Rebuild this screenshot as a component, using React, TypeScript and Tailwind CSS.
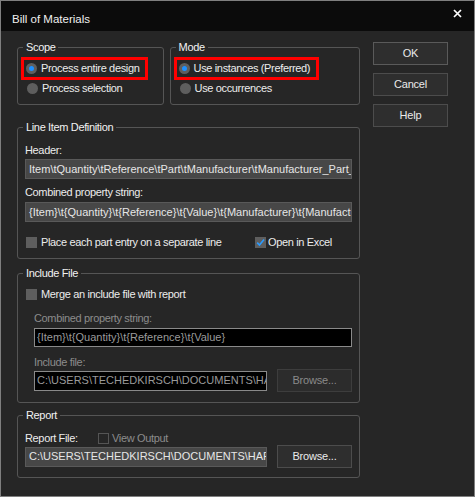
import React from "react";

function Radio({ checked }: { checked?: boolean }) {
  return (
    <span className="relative inline-flex h-[11px] w-[11px] shrink-0 items-center justify-center rounded-full bg-[#5e5e5e]">
      {checked && <span className="h-[5px] w-[5px] rounded-full bg-[#1e90ff]" />}
    </span>
  );
}

function Check({ checked, disabled }: { checked?: boolean; disabled?: boolean }) {
  if (disabled) {
    return <span className="inline-block h-[11px] w-[11px] shrink-0 border border-[#555555] bg-transparent" />;
  }
  return (
    <span className="relative inline-flex h-[11px] w-[11px] shrink-0 items-center justify-center bg-[#5e5e5e]">
      {checked && (
        <svg width="9" height="9" viewBox="0 0 9 9" className="absolute">
          <path d="M1.2 4.6 L3.5 7 L8 1.5" fill="none" stroke="#2b9bff" strokeWidth="1.6" />
        </svg>
      )}
    </span>
  );
}

function Group({
  title,
  className,
  inner,
  children,
}: {
  title: string;
  className?: string;
  inner?: string;
  children: React.ReactNode;
}) {
  return (
    <fieldset className={"rounded-[3px] border border-[#555555] " + (className ?? "")}>
      <legend className="ml-[5px] px-[3px] text-[11px] leading-[14px] tracking-[-0.35px] text-[#f2f2f2]">{title}</legend>
      <div className={inner ?? ""}>{children}</div>
    </fieldset>
  );
}

function Btn({ label, disabled, className }: { label: string; disabled?: boolean; className?: string }) {
  return (
    <div
      className={
        "flex h-[23px] w-[75px] shrink-0 items-center justify-center border text-[11px] tracking-[-0.2px] " +
        (disabled ? "border-[#3d3d3d] bg-[#2c2c2c] text-[#8a8a8a] " : "border-[#4c4c4c] bg-[#2e2e2e] text-[#eaeaea] ") +
        (className ?? "")
      }
    >
      {label}
    </div>
  );
}

const lbl = "tracking-[-0.35px]";

export default function App() {
  return (
    <div className="h-[497px] w-[475px] overflow-hidden border border-[#7f7f7f] bg-[#262626] font-['Liberation_Sans',Arial,sans-serif] text-[11px] text-[#ececec]">
      {/* Title bar */}
      <div className="flex h-[30px] items-center justify-between bg-[#0b0b0b] pl-[11px] pr-[12px]">
        <span className="mt-[7px] text-[11.5px] text-[#f0f0f0]">Bill of Materials</span>
        <svg width="9" height="9" viewBox="0 0 9 9" className="mb-[5px]">
          <path d="M1 1 L8 8 M8 1 L1 8" stroke="#ffffff" strokeWidth="1.7" />
        </svg>
      </div>

      <div className="flex pl-[16px] pt-[9px]">
        {/* Left column */}
        <div className="flex w-[343px] flex-col">
          <div className="flex gap-[6px]">
            <Group title="Scope" className="h-[65px] w-[147px]">
              <div className="ml-[3px] mt-[3px] flex h-[23px] w-[127px] items-center border-[3px] border-[#ff0000] pl-[2px]">
                <Radio checked />
                <span className={"ml-[4px] whitespace-nowrap " + lbl}>Process entire design</span>
              </div>
              <div className="flex h-[16px] items-center pl-[9px]">
                <Radio />
                <span className={"ml-[4px] whitespace-nowrap " + lbl}>Process selection</span>
              </div>
            </Group>
            <Group title="Mode" className="h-[65px] w-[191px]">
              <div className="ml-[3px] mt-[3px] flex h-[23px] w-[145px] items-center border-[3px] border-[#ff0000] pl-[2px]">
                <Radio checked />
                <span className={"ml-[4px] whitespace-nowrap " + lbl}>Use instances (Preferred)</span>
              </div>
              <div className="flex h-[16px] items-center pl-[9px]">
                <Radio />
                <span className={"ml-[4px] whitespace-nowrap " + lbl}>Use occurrences</span>
              </div>
            </Group>
          </div>

          <Group title="Line Item Definition" className="mt-[15px] h-[139px] w-[343px]" inner="px-[7px]">
            <div className={"mt-[9px] h-[14px] leading-[14px] " + lbl}>Header:</div>
            <div className="mt-[2px] flex h-[20px] w-[327px] items-center overflow-hidden whitespace-nowrap border border-[#595959] bg-[#474747] pl-[3px] text-[#e6e6e6]">
              Item\tQuantity\tReference\tPart\tManufacturer\tManufacturer_Part_Number
            </div>
            <div className={"mt-[6px] h-[14px] leading-[14px] " + lbl}>Combined property string:</div>
            <div className="mt-[3px] flex h-[20px] w-[327px] items-center overflow-hidden whitespace-nowrap border border-[#595959] bg-[#474747] pl-[3px] text-[#e6e6e6]">
              {"{Item}\\t{Quantity}\\t{Reference}\\t{Value}\\t{Manufacturer}\\t{Manufacturer_Part_Number}"}
            </div>
            <div className="mt-[13px] flex h-[14px] items-center">
              <span className="ml-[1px] flex">
                <Check />
              </span>
              <span className={"ml-[4px] w-[214px] shrink-0 whitespace-nowrap " + lbl}>Place each part entry on a separate line</span>
              <span className="flex">
                <Check checked />
              </span>
              <span className={"ml-[2px] whitespace-nowrap " + lbl}>Open in Excel</span>
            </div>
          </Group>

          <Group title="Include File" className="mt-[7px] h-[137px] w-[343px]" inner="px-[7px]">
            <div className="mt-[7px] flex h-[14px] items-center">
              <span className="ml-[1px] flex">
                <Check />
              </span>
              <span className={"ml-[4px] whitespace-nowrap " + lbl}>Merge an include file with report</span>
            </div>
            <div className={"ml-[9px] mt-[10px] h-[14px] leading-[14px] text-[#8c8c8c] " + lbl}>Combined property string:</div>
            <div className="ml-[9px] mt-[3px] flex h-[19px] w-[318px] items-center overflow-hidden whitespace-nowrap border-[1.5px] border-[#8a8a8a] bg-[#000000] pl-[2px] text-[#9a9a9a]">
              {"{Item}\\t{Quantity}\\t{Reference}\\t{Value}"}
            </div>
            <div className={"ml-[9px] mt-[8px] h-[14px] leading-[14px] text-[#8c8c8c] " + lbl}>Include file:</div>
            <div className="ml-[9px] flex items-center">
              <div className="flex h-[20px] w-[233px] shrink-0 items-center overflow-hidden whitespace-nowrap border-[1.5px] border-[#8a8a8a] bg-[#000000] pl-[2px] text-[#9a9a9a]">
                C:\USERS\TECHEDKIRSCH\DOCUMENTS\HARDWARE\BOM.TXT
              </div>
              <Btn label="Browse..." disabled className="ml-[10px]" />
            </div>
          </Group>

          <Group title="Report" className="mt-[5px] h-[70px] w-[343px]" inner="px-[7px]">
            <div className="mt-[9px] flex h-[14px] items-center">
              <span className={"w-[73px] shrink-0 whitespace-nowrap " + lbl}>Report File:</span>
              <span className="flex">
                <Check disabled />
              </span>
              <span className={"ml-[3px] whitespace-nowrap text-[#8c8c8c] " + lbl}>View Output</span>
            </div>
            <div className="flex items-center">
              <div className="flex h-[20px] w-[242px] shrink-0 items-center overflow-hidden whitespace-nowrap border border-[#595959] bg-[#474747] pl-[3px] text-[#e6e6e6]">
                C:\USERS\TECHEDKIRSCH\DOCUMENTS\HARDWARE\BOM.BOM
              </div>
              <Btn label="Browse..." className="ml-[10px]" />
            </div>
          </Group>
        </div>

        {/* Right column buttons */}
        <div className="ml-[13px] flex flex-col gap-[8px] pt-[2px]">
          <Btn label="OK" className="border-[#5a5a5a]" />
          <Btn label="Cancel" />
          <Btn label="Help" />
        </div>
      </div>
    </div>
  );
}
